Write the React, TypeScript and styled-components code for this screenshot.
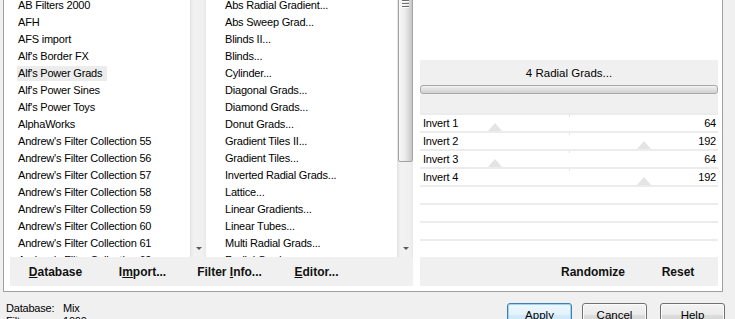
import React from 'react';
import styled, { createGlobalStyle } from 'styled-components';

const Global = createGlobalStyle`
  html, body { margin: 0; padding: 0; background: #f0f0f0; overflow: hidden; }
  body {
    font-family: "Liberation Sans", Arial, sans-serif;
    font-size: 11px;
    color: #000;
  }
  button { font-family: inherit; }
`;

const Dialog = styled.div`
  width: 735px;
  height: 319px;
  overflow: hidden;
  background: #f0f0f0;
  padding-left: 3px;
  box-sizing: border-box;
`;

const Group = styled.div`
  width: 720px;
  height: 292px;
  box-sizing: border-box;
  background: #fff;
  border: 1px solid #a0a0a0;
  border-top: none;
  padding: 0 4px 0 2px;
  display: grid;
  grid-template-columns: 200px 200px 298px;
  grid-template-rows: 257px 29px;
  column-gap: 7px;
`;

const ListBox = styled.div`
  display: flex;
  height: 257px;
  overflow: hidden;
  background: #fff;
`;

const ListBody = styled.div`
  flex: 1;
  overflow: hidden;
  padding-left: 11px;
  letter-spacing: -0.2px;
`;

const ListInner = styled.div`
  margin-top: -3px;
`;

const ListItem = styled.div`
  height: 17px;
  line-height: 17px;
  white-space: nowrap;
`;

const ItemText = styled.span<{ $selected?: boolean }>`
  display: inline-block;
  line-height: 15px;
  padding: 0 5px 0 1px;
  background: ${(p) => (p.$selected ? '#ececec' : 'transparent')};
`;

const Scrollbar = styled.div`
  width: 16px;
  display: flex;
  flex-direction: column;
  box-sizing: border-box;
  border-left: 1px solid #e4e4e4;
  background: linear-gradient(to right, #e9e9e9 0, #f2f2f2 3px, #f0f0f0 12px, #e8e8e8 100%);
`;

const Thumb = styled.div<{ $h: number }>`
  height: ${(p) => p.$h}px;
  margin-top: -4px;
  box-sizing: border-box;
  border: 1px solid #a4a4a4;
  border-radius: 0 0 2px 2px;
  background: linear-gradient(to right, #f6f6f6 0, #ececec 45%, #d8d8d8 75%, #c6c6c6 100%);
  display: flex;
  flex-direction: column;
  align-items: center;
  padding-top: 3px;
  gap: 1px;
`;

const Grip = styled.div`
  width: 7px;
  height: 1px;
  background: #6e6e6e;
  border-bottom: 1px solid #fafafa;
`;

const TrackSpace = styled.div`
  flex: 1;
`;

const ArrowBox = styled.div`
  height: 17px;
  display: flex;
  align-items: center;
  justify-content: center;
`;

const ArrowDown = styled.div`
  width: 0;
  height: 0;
  border-left: 3px solid transparent;
  border-right: 3px solid transparent;
  border-top: 3px solid #5a5a5a;
`;

const ActionBar = styled.div<{ $end?: boolean }>`
  background: #f0f0f0;
  display: flex;
  align-items: center;
  justify-content: ${(p) => (p.$end ? 'flex-end' : 'flex-start')};
  gap: ${(p) => (p.$end ? '5px' : '0')};
  padding-left: ${(p) => (p.$end ? '0' : '2px')};
`;

const LeftBar = styled(ActionBar)`
  grid-column: 1 / span 2;
  grid-row: 2;
  margin-left: 4px;
`;

const BarButton = styled.button<{ $w: number }>`
  width: ${(p) => p.$w}px;
  height: 22px;
  border: none;
  background: transparent;
  padding: 0;
  font-size: 12px;
  font-weight: bold;
  color: #111;
  text-align: center;
  cursor: default;
`;

const RightPanel = styled.div`
  grid-column: 3;
  grid-row: 1 / span 2;
  display: flex;
  flex-direction: column;
`;

const Preview = styled.div`
  height: 60px;
  background: #fff;
`;

const Header = styled.div`
  height: 54px;
  background: #f0f0f0;
  display: flex;
  flex-direction: column;
  align-items: stretch;
`;

const Title = styled.div`
  margin-top: 6px;
  height: 14px;
  line-height: 14px;
  text-align: center;
  font-size: 11.5px;
`;

const Progress = styled.div`
  margin-top: 5px;
  height: 9px;
  box-sizing: border-box;
  border: 1px solid #a8a8a8;
  border-radius: 3px;
  background: linear-gradient(#f4f4f4 0, #e2e2e2 40%, #d2d2d2 100%);
`;

const SliderRow = styled.div`
  position: relative;
  height: 18px;
  box-sizing: border-box;
  border-top: 2px solid #ececec;
  background: #fff;
  display: flex;
  justify-content: space-between;
  align-items: center;
  padding: 0 2px 0 3px;
  line-height: 16px;
  letter-spacing: -0.2px;
`;

const SliderThumb = styled.div`
  position: absolute;
  bottom: 0;
  width: 0;
  height: 0;
  transform: translateX(-50%);
  border-left: 7px solid transparent;
  border-right: 7px solid transparent;
  border-bottom: 8px solid #e4e4e4;
`;

const Tick = styled.div`
  position: absolute;
  top: 0;
  left: 50%;
  width: 1px;
  height: 2px;
  background: #e2e2e2;
`;

const RowLabel = styled.span`
  position: relative;
`;

const RightBar = styled(ActionBar)`
  height: 29px;
`;

const Status = styled.div`
  width: 722px;
  display: flex;
  justify-content: space-between;
  align-items: flex-start;
`;

const StatusText = styled.div`
  padding: 10px 0 0 3px;
  display: grid;
  grid-template-columns: 57px auto;
  line-height: 13px;
  letter-spacing: -0.2px;
`;

const DialogButtons = styled.div`
  display: flex;
  margin-top: 11px;
`;

const DlgButton = styled.button<{ $default?: boolean; $gap: number }>`
  width: 65px;
  height: 23px;
  margin-left: ${(p) => p.$gap}px;
  box-sizing: border-box;
  border: 1px solid ${(p) => (p.$default ? '#3c7fb1' : '#707070')};
  border-radius: 3px;
  background: ${(p) =>
    p.$default
      ? 'linear-gradient(#eef7fd 0, #e3f2fb 50%, #d4ebf8 51%, #c6e3f4 100%)'
      : 'linear-gradient(#f3f3f3 0, #ebebeb 50%, #dddddd 51%, #d0d0d0 100%)'};
  box-shadow: inset 0 0 0 1px ${(p) => (p.$default ? '#9ed3f2' : '#fbfbfb')};
  font-size: 11.5px;
  color: #000;
  padding: 0;
  cursor: default;
`;

const listA = [
  'AB Filters 2000',
  'AFH',
  'AFS import',
  "Alf's Border FX",
  "Alf's Power Grads",
  "Alf's Power Sines",
  "Alf's Power Toys",
  'AlphaWorks',
  "Andrew's Filter Collection 55",
  "Andrew's Filter Collection 56",
  "Andrew's Filter Collection 57",
  "Andrew's Filter Collection 58",
  "Andrew's Filter Collection 59",
  "Andrew's Filter Collection 60",
  "Andrew's Filter Collection 61",
  "Andrew's Filter Collection 62",
];

const listB = [
  'Abs Radial Gradient...',
  'Abs Sweep Grad...',
  'Blinds II...',
  'Blinds...',
  'Cylinder...',
  'Diagonal Grads...',
  'Diamond Grads...',
  'Donut Grads...',
  'Gradient Tiles II...',
  'Gradient Tiles...',
  'Inverted Radial Grads...',
  'Lattice...',
  'Linear Gradients...',
  'Linear Tubes...',
  'Multi Radial Grads...',
  'Radial Grads...',
];

const sliders: ({ label: string; value: number } | null)[] = [
  { label: 'Invert 1', value: 64 },
  { label: 'Invert 2', value: 192 },
  { label: 'Invert 3', value: 64 },
  { label: 'Invert 4', value: 192 },
  null,
  null,
  null,
  null,
];

function FilterList({ items, selected, thumb }: { items: string[]; selected?: number; thumb?: number }) {
  return (
    <ListBox>
      <ListBody>
        <ListInner>
          {items.map((t, i) => (
            <ListItem key={t}>
              <ItemText $selected={i === selected}>{t}</ItemText>
            </ListItem>
          ))}
        </ListInner>
      </ListBody>
      <Scrollbar>
        {thumb ? (
          <Thumb $h={thumb}>
            <Grip />
            <Grip />
            <Grip />
          </Thumb>
        ) : null}
        <TrackSpace />
        <ArrowBox>
          <ArrowDown />
        </ArrowBox>
      </Scrollbar>
    </ListBox>
  );
}

export default function App() {
  return (
    <>
      <Global />
      <Dialog>
        <Group>
          <FilterList items={listA} selected={4} />
          <FilterList items={listB} thumb={166} />
          <RightPanel>
            <Preview />
            <Header>
              <Title>4 Radial Grads...</Title>
              <Progress />
            </Header>
            {sliders.map((s, i) => (
              <SliderRow key={i}>
                {s ? (
                  <>
                    <Tick />
                    <SliderThumb style={{ left: `${(s.value / 255) * 100}%` }} />
                    <RowLabel>{s.label}</RowLabel>
                    <RowLabel>{s.value}</RowLabel>
                  </>
                ) : null}
              </SliderRow>
            ))}
            <RightBar $end>
              <BarButton $w={80}>Randomize</BarButton>
              <BarButton $w={80}>Reset</BarButton>
            </RightBar>
          </RightPanel>
          <LeftBar>
            <BarButton $w={87}>
              <u>D</u>atabase
            </BarButton>
            <BarButton $w={87}>
              I<u>m</u>port...
            </BarButton>
            <BarButton $w={87}>
              Filter <u>I</u>nfo...
            </BarButton>
            <BarButton $w={87}>
              <u>E</u>ditor...
            </BarButton>
          </LeftBar>
        </Group>
        <Status>
          <StatusText>
            <span>Database:</span>
            <span>Mix</span>
            <span>Filters:</span>
            <span>1000</span>
          </StatusText>
          <DialogButtons>
            <DlgButton $default $gap={0}>Apply</DlgButton>
            <DlgButton $gap={10}>Cancel</DlgButton>
            <DlgButton $gap={13}>Help</DlgButton>
          </DialogButtons>
        </Status>
      </Dialog>
    </>
  );
}
